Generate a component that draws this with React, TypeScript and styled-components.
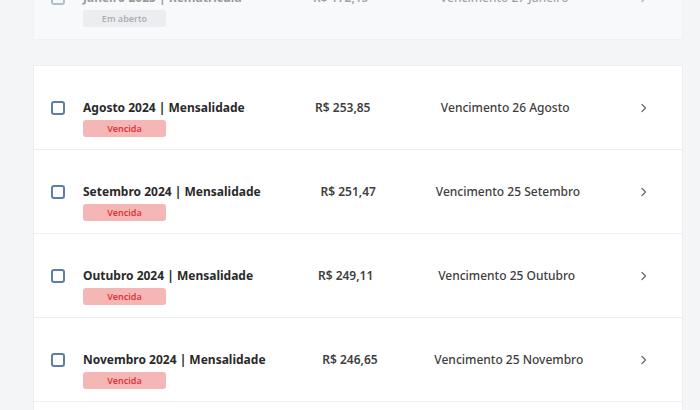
import React from "react";
import styled, { createGlobalStyle } from "styled-components";

const GlobalStyle = createGlobalStyle`
  html, body {
    margin: 0;
    padding: 0;
    background: #f4f5f7;
    font-family: "Noto Sans", "Liberation Sans", sans-serif;
    overflow: hidden;
  }
`;

const Page = styled.div`
  display: flex;
  flex-direction: column;
  gap: 25px;
  margin-top: -45px;
  padding: 0 17px 0 33px;
`;

const Card = styled.div<{ $muted?: boolean }>`
  background: #ffffff;
  border: 1px solid #eceef1;
  opacity: ${(p) => (p.$muted ? 0.45 : 1)};
`;

const Row = styled.div`
  display: flex;
  justify-content: space-between;
  align-items: flex-start;
  padding: 35px 34px 12px 17px;
  border-bottom: 1px solid #eceef1;
  &:last-child {
    border-bottom: none;
  }
`;

const Left = styled.div`
  display: flex;
  align-items: flex-start;
  gap: 18px;
`;

const Check = styled.span`
  box-sizing: border-box;
  width: 14px;
  height: 14px;
  border: 2px solid #5d7ea6;
  border-radius: 3px;
  background: #fff;
`;

const Info = styled.div`
  display: flex;
  flex-direction: column;
  gap: 5px;
`;

const Title = styled.div`
  font-size: 12px;
  line-height: 14px;
  font-weight: 700;
  color: #2a2a2a;
  white-space: nowrap;
`;

const Badge = styled.span<{ $tone: "late" | "open" }>`
  display: flex;
  align-items: center;
  justify-content: center;
  width: 83px;
  height: 17px;
  border-radius: 3px;
  font-size: 9px;
  font-weight: 600;
  background: ${(p) => (p.$tone === "late" ? "#f5b6b6" : "#e3e4e8")};
  color: ${(p) => (p.$tone === "late" ? "#e0353b" : "#555a62")};
`;

const Cell = styled.div<{ $weight: number }>`
  font-size: 12px;
  line-height: 14px;
  font-weight: ${(p) => p.$weight};
  color: #3e3e3e;
  white-space: nowrap;
`;

const Chevron = styled.svg`
  width: 8px;
  height: 14px;
  color: #707070;
`;

type Bill = {
  title: string;
  status: "late" | "open";
  amount: string;
  due: string;
};

const upcoming: Bill[] = [
  { title: "Janeiro 2025 | Rematrícula", status: "open", amount: "R$ 172,15", due: "Vencimento 27 Janeiro" },
];

const overdue: Bill[] = [
  { title: "Agosto 2024 | Mensalidade", status: "late", amount: "R$ 253,85", due: "Vencimento 26 Agosto" },
  { title: "Setembro 2024 | Mensalidade", status: "late", amount: "R$ 251,47", due: "Vencimento 25 Setembro" },
  { title: "Outubro 2024 | Mensalidade", status: "late", amount: "R$ 249,11", due: "Vencimento 25 Outubro" },
  { title: "Novembro 2024 | Mensalidade", status: "late", amount: "R$ 246,65", due: "Vencimento 25 Novembro" },
  { title: "Dezembro 2024 | Mensalidade", status: "late", amount: "R$ 244,20", due: "Vencimento 26 Dezembro" },
];

const BillRow = ({ bill }: { bill: Bill }) => (
  <Row>
    <Left>
      <Check />
      <Info>
        <Title>{bill.title}</Title>
        <Badge $tone={bill.status}>{bill.status === "late" ? "Vencida" : "Em aberto"}</Badge>
      </Info>
    </Left>
    <Cell $weight={600}>{bill.amount}</Cell>
    <Cell $weight={500}>{bill.due}</Cell>
    <Chevron viewBox="0 0 8 14" fill="none">
      <path d="M2 3.5 5.5 7 2 10.5" stroke="currentColor" strokeWidth="1.4" strokeLinecap="round" strokeLinejoin="round" />
    </Chevron>
  </Row>
);

export default function App() {
  return (
    <>
      <GlobalStyle />
      <Page>
        <Card $muted>
          {upcoming.map((b) => (
            <BillRow key={b.title} bill={b} />
          ))}
        </Card>
        <Card>
          {overdue.map((b) => (
            <BillRow key={b.title} bill={b} />
          ))}
        </Card>
      </Page>
    </>
  );
}
